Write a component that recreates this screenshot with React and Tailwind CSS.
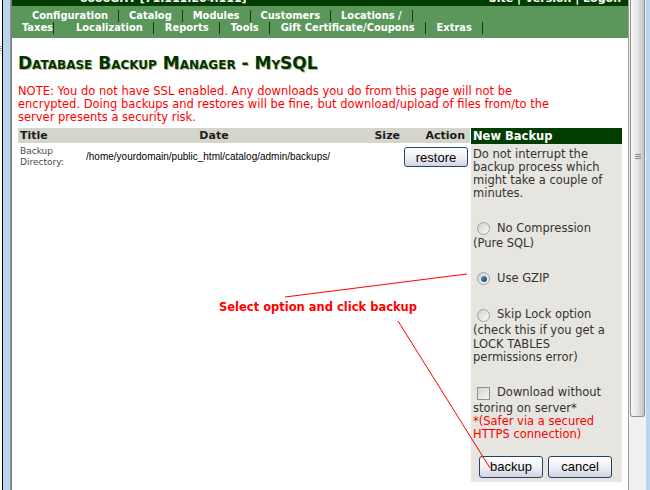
import React from "react";

const navTop = ["Configuration", "Catalog", "Modules", "Customers", "Locations /"];
const navBottom = ["Localization", "Reports", "Tools", "Gift Certificate/Coupons", "Extras"];

export default function App() {
  return (
    <div className="relative flex h-[490px] w-[650px] overflow-hidden bg-white font-['DejaVu_Sans',sans-serif]">
      {/* Left window frame */}
      <div className="flex w-[12px] shrink-0">
        <div className="flex w-[2px] flex-col bg-white pt-[46px]">
          <div className="h-[1px] bg-[#9a9a9a]" />
          <div className="mt-[1px] h-[1px] bg-[#9a9a9a]" />
          <div className="mt-[1px] h-[1px] bg-[#9a9a9a]" />
        </div>
        <div className="w-[1px] bg-black" />
        <div className="w-[7px] bg-[#bdd4ee]" />
        <div className="w-[2px] bg-linear-to-r from-[#a0a0a0] to-[#6f6f6f]" />
      </div>

      {/* Page */}
      <main className="flex w-[616px] shrink-0 flex-col">
        {/* Top bar, cut off by the window edge */}
        <div className="relative h-[6px] overflow-hidden bg-[#003c00] text-[11px] font-bold leading-[12px] text-white">
          <div className="mt-[-7px] flex">
            <span className="ml-[68px]">ooooGHT [71.111.204.111]</span>
            <span className="ml-auto mr-[6px]">Site | Version | Logoff</span>
          </div>
        </div>

        {/* Navigation */}
        <nav className="h-[32px] bg-[#5b975b] pt-[4px] font-['DejaVu_Sans_Condensed','Liberation_Sans',sans-serif] text-[11px] font-bold leading-[12px] text-white">
          <div className="flex h-[12px] pl-[10px]">
            {navTop.map((t) => (
              <span key={t} className="border-r border-[#173717] px-[10px] whitespace-nowrap">
                {t}
              </span>
            ))}
          </div>
          <div className="flex h-[12px] pl-[10px]">
            <span className="border-r border-[#173717] whitespace-nowrap">Taxes</span>
            {navBottom.map((t, i) => (
              <span
                key={t}
                className={`border-r border-[#173717] whitespace-nowrap pr-[10px] ${i === 0 ? "pl-[22px]" : "pl-[11px]"}`}
              >
                {t}
              </span>
            ))}
          </div>
        </nav>

        <div className="px-[6px]">
          <h1 className="mt-[15px] h-[20px] text-[17px] font-bold leading-[20px] text-[#013301] [font-variant:small-caps] [text-shadow:1px_1px_0_#b9b98a]">
            Database Backup Manager - MySQL
          </h1>

          <p className="mt-[12px] whitespace-nowrap text-[11.5px] leading-[13px] text-[#ff0000]">
            NOTE: You do not have SSL enabled. Any downloads you do from this page will not be
            <br />
            encrypted. Doing backups and restores will be fine, but download/upload of files from/to the
            <br />
            server presents a security risk.
          </p>

          <div className="mt-[4px] flex items-start gap-[1px]">
            <BackupTable />
            <NewBackupPanel />
          </div>
        </div>
      </main>

      {/* Scrollbar */}
      <div className="flex w-[18px] shrink-0 border-l border-[#9c9c9c] bg-[#f1f1f1]">
        <div className="ml-[1px] flex h-[417px] w-[15px] flex-col items-center rounded-b-[3px] border border-t-0 border-[#8e8e8e] bg-linear-to-r from-[#f8f8f8] via-[#e4e4e6] to-[#c3c3cb]">
          <div className="mt-[154px] flex w-[6px] flex-col gap-[1px]">
            <div className="h-[1px] bg-[#8a8a8a]" />
            <div className="h-[1px] bg-[#8a8a8a]" />
            <div className="h-[1px] bg-[#8a8a8a]" />
          </div>
        </div>
      </div>
      <div className="w-[4px] shrink-0 bg-[#bdd4ee]" />

      <Annotation />
    </div>
  );
}

function BackupTable() {
  return (
    <div className="w-[452px] shrink-0">
      <div className="flex h-[15px] items-center bg-[#d6d5cb] text-[11px] font-bold leading-[15px] text-[#1c1c1c]">
        <div className="w-[66px] pl-[2px]">Title</div>
        <div className="w-[260px] text-center">Date</div>
        <div className="w-[58px] pr-[2px] text-right">Size</div>
        <div className="w-[68px] pr-[5px] text-right">Action</div>
      </div>
      <div className="flex h-[27px] items-center">
        <div className="w-[66px] pl-[2px] pt-[1px] text-[9px] leading-[11px] text-[#4a4a4a]">
          Backup
          <br />
          Directory:
        </div>
        <div className="w-[260px] pl-[2px] font-['Liberation_Sans',sans-serif] text-[10px] leading-[12px] text-black">
          /home/yourdomain/public_html/catalog/admin/backups/
        </div>
        <div className="w-[58px]" />
        <div className="w-[68px] pl-[2px]">
          <Button className="h-[20px]">restore</Button>
        </div>
      </div>
    </div>
  );
}

function NewBackupPanel() {
  return (
    <div className="w-[151px] shrink-0 bg-[#e7e5df] pb-[4px] text-[11.5px] text-[#333333]">
      <div className="h-[16px] bg-[#013d01] pl-[2px] font-bold leading-[16px] text-white">New Backup</div>

      <div className="mt-[4px] pl-[2px] leading-[13px]">
        Do not interrupt the
        <br />
        backup process which
        <br />
        might take a couple of
        <br />
        minutes.
      </div>

      <OptionRow className="mt-[20px]" control={<Radio />} label="No Compression" />
      <div className="pl-[2px] leading-[13px]">(Pure SQL)</div>

      <OptionRow className="mt-[20px]" control={<Radio checked />} label="Use GZIP" />

      <OptionRow className="mt-[19px] h-[18px]" control={<Radio />} label="Skip Lock option" />
      <div className="whitespace-nowrap pl-[2px] leading-[13.5px]">
        (check this if you get a
        <br />
        LOCK TABLES
        <br />
        permissions error)
      </div>

      <OptionRow className="mt-[20px]" control={<Checkbox />} label="Download without" />
      <div className="whitespace-nowrap pl-[2px] leading-[13px]">
        storing on server*
        <br />
        <span className="text-[#ff0000]">
          *(Safer via a secured
          <br />
          HTTPS connection)
        </span>
      </div>

      <div className="mt-[15px] flex gap-[5px] pl-[8px]">
        <Button className="h-[22px]">backup</Button>
        <Button className="h-[22px]">cancel</Button>
      </div>
    </div>
  );
}

function OptionRow({ control, label, className = "" }) {
  return (
    <div className={`flex h-[17px] items-center whitespace-nowrap ${className}`}>
      <div className="ml-[6px] mr-[7px]">{control}</div>
      <span>{label}</span>
    </div>
  );
}

function Radio({ checked }) {
  return (
    <span className="flex h-[13px] w-[13px] items-center justify-center rounded-full border border-[#9ea3a8] bg-linear-to-br from-[#cfcfcb] to-[#fbfbfb]">
      {checked && <span className="h-[6px] w-[6px] rounded-full bg-linear-to-br from-[#5aa0c8] to-[#0d3c5c]" />}
    </span>
  );
}

function Checkbox() {
  return <span className="block h-[13px] w-[13px] border border-[#8e8f8f] bg-linear-to-br from-[#d2d2cf] to-[#f6f6f4]" />;
}

function Button({ children, className = "" }) {
  return (
    <button
      className={`w-[64px] rounded-[3px] border border-[#22456d] bg-linear-to-b from-white via-[#f1f1f4] to-[#d2d2e4] font-['Liberation_Sans',sans-serif] text-[13px] leading-none text-black ${className}`}
    >
      {children}
    </button>
  );
}

function Annotation() {
  return (
    <>
      <div className="absolute left-[219px] top-[300px] whitespace-nowrap text-[11.5px] font-bold leading-[14px] text-[#ff0000]">
        Select option and click backup
      </div>
      <svg className="pointer-events-none absolute left-0 top-0" width="650" height="490" viewBox="0 0 650 490">
        <line x1="285" y1="297" x2="467" y2="274" stroke="#ff0000" strokeWidth="1" />
        <line x1="398" y1="321" x2="490" y2="468" stroke="#ff0000" strokeWidth="1" />
      </svg>
    </>
  );
}
